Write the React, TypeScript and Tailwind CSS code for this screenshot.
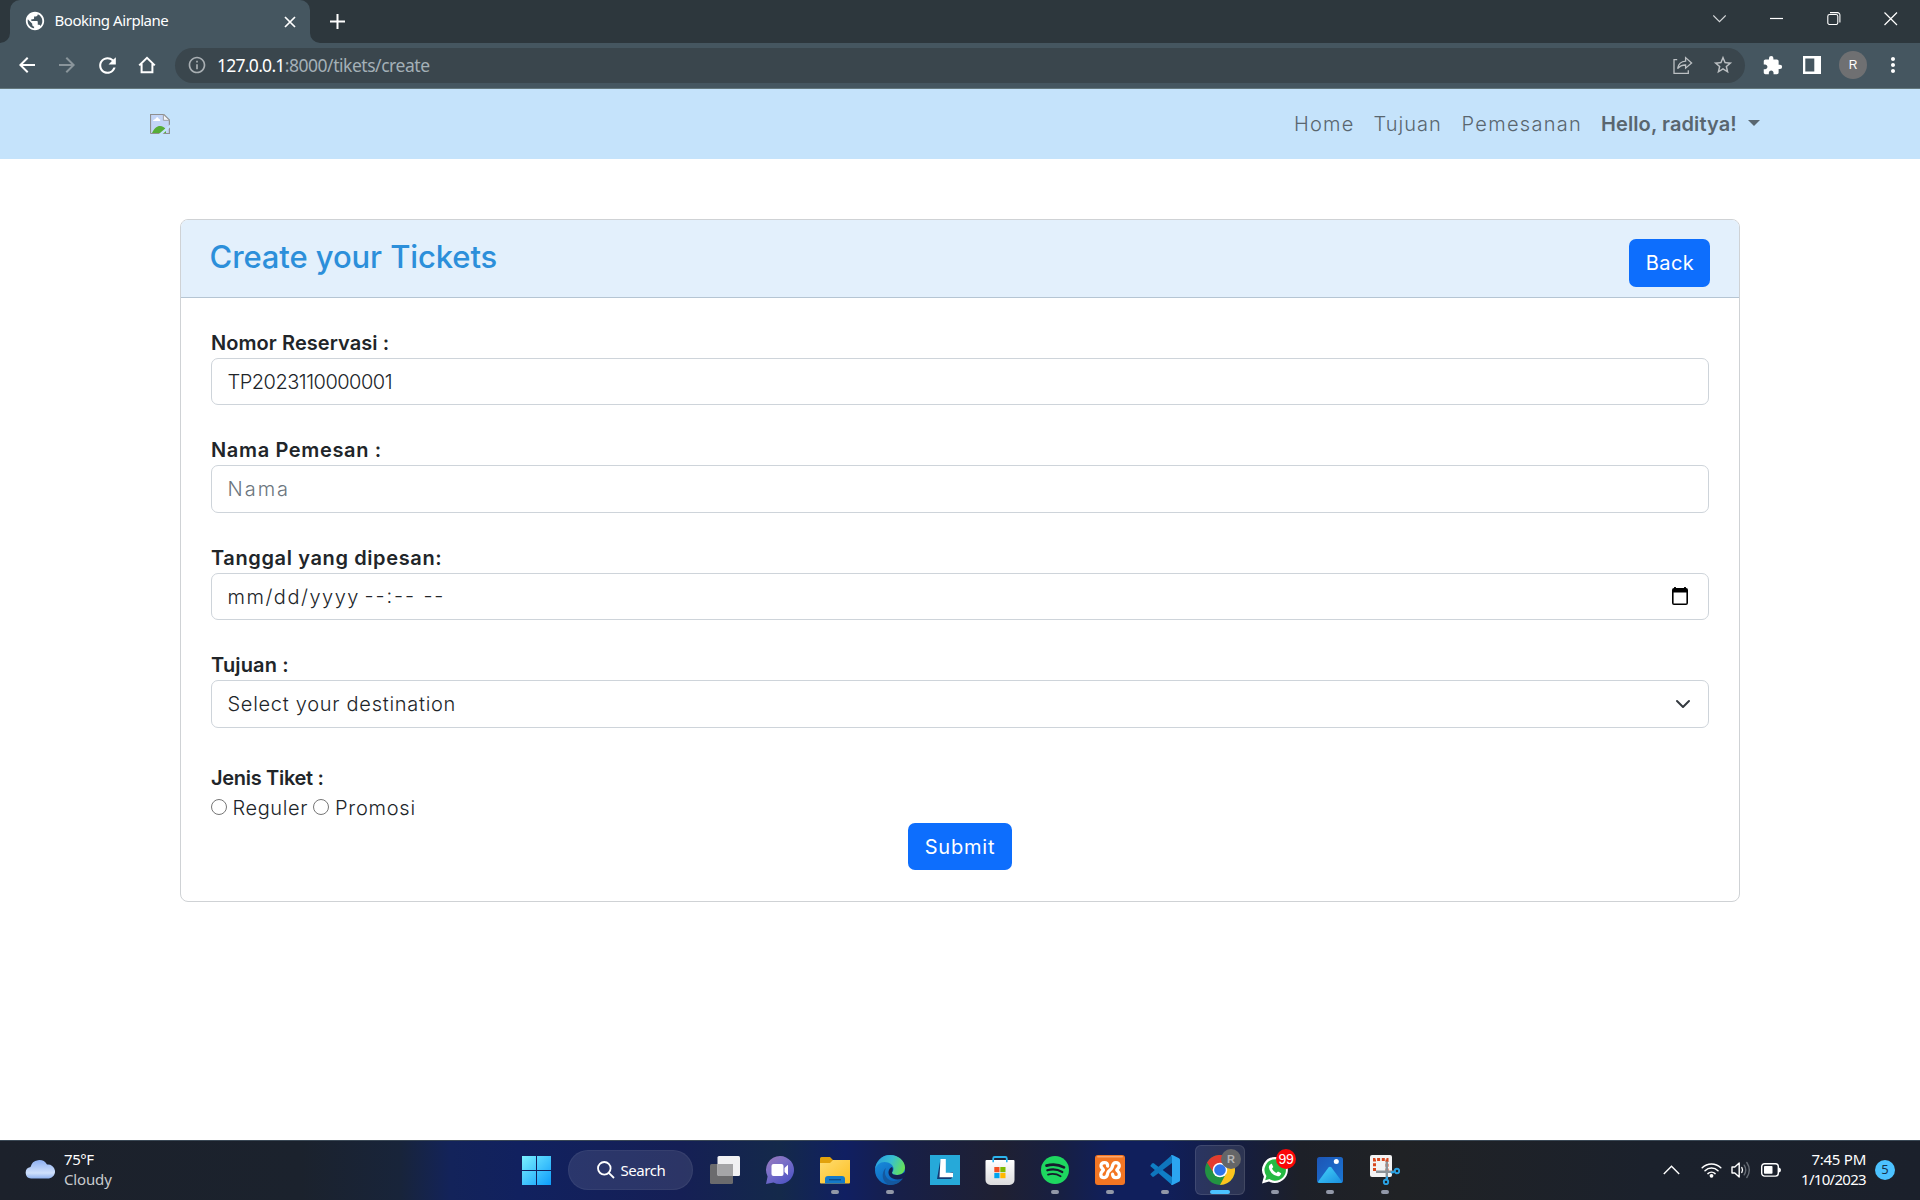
import type { ReactNode } from "react";
import { MdArrowBack, MdArrowForward, MdRefresh, MdInfoOutline, MdStarBorder, MdExtension, MdMoreVert, MdPublic } from "react-icons/md";

function TabStrip() {
  return (
    <div className="flex h-[43px] bg-[#2d373d] text-white">
      <div className="flex w-[10px] items-end">
        <svg width="10" height="10" viewBox="0 0 10 10"><path d="M10 0V10H0A10 10 0 0 0 10 0Z" fill="#455660" /></svg>
      </div>
      <div className="flex h-[43px] w-[300px] items-center rounded-t-[10px] bg-[#455660] pl-[14px] pr-[13px]">
        <MdPublic size={22} className="-mt-px" />
        <span className="ml-[8.5px] flex-1 whitespace-nowrap pb-[4px] text-[15px] leading-5 tracking-[-0.45px]">Booking Airplane</span>
        <svg width="14" height="14" viewBox="0 0 14 14" stroke="white" strokeWidth="1.7"><path d="M2 2L12 12M12 2L2 12" /></svg>
      </div>
      <div className="flex w-[20px] items-end">
        <svg width="10" height="10" viewBox="0 0 10 10"><path d="M0 0V10H10A10 10 0 0 1 0 0Z" fill="#455660" /></svg>
      </div>
      <svg className="mt-[14px]" width="15" height="15" viewBox="0 0 15 15" stroke="white" strokeWidth="2"><path d="M7.5 0V15M0 7.5H15" /></svg>
      <div className="ml-auto flex items-start gap-[43px] pr-[22px] pt-[12px]">
        <svg width="13" height="13" viewBox="0 0 13 13" fill="none" stroke="#d5d8da" strokeWidth="1.1"><path d="M0.3 3.5L6.5 9.7L12.7 3.5" /></svg>
        <svg className="ml-px" width="13" height="13" viewBox="0 0 13 13" stroke="white" strokeWidth="1.2"><path d="M0 6.5H13" /></svg>
        <svg className="ml-px" width="14" height="13" viewBox="0 0 14 13" fill="none" stroke="white" strokeWidth="1.1"><rect x="0.8" y="2.5" width="10" height="10" rx="1.8" /><path d="M3 0.6H10.5A2.4 2.4 0 0 1 12.9 3V10.5" /></svg>
        <svg width="14" height="14" viewBox="0 0 14 14" stroke="white" strokeWidth="1.2"><path d="M0.5 0.5L13 13M13 0.5L0.5 13" /></svg>
      </div>
    </div>
  );
}

function Toolbar() {
  return (
    <div className="flex h-[46px] items-center border-b border-[#64787d] bg-[#455660] pb-px pl-[16px] text-white">
      <div className="flex w-[159px] items-center gap-[17px]">
        <MdArrowBack size={24} className="-ml-px" />
        <MdArrowForward size={24} className="ml-[-1px] text-[#8a959b]" />
        <MdRefresh size={25} className="ml-[-1px]" />
        <svg className="ml-px" width="18" height="18" viewBox="0 0 18 18" fill="none" stroke="white" strokeWidth="2"><path d="M1.2 9.4L9 1.8L16.8 9.4M3.6 7.8V16.2H14.4V7.8" /></svg>
      </div>
      <div className="flex h-[35px] w-[1570px] items-center rounded-full bg-[#3a464d] pl-[12px] pr-[11px]">
        <MdInfoOutline size={20} className="text-[#a9afb3]" />
        <span className="ml-[10px] whitespace-nowrap text-[17.5px] leading-6 tracking-[-0.72px]">127.0.0.1</span>
        <span className="whitespace-nowrap text-[17.5px] leading-6 tracking-[-0.46px] text-[#a4b0b7]">:8000/tikets/create</span>
        <svg className="ml-auto" width="20" height="19" viewBox="0 0 20 19" fill="none" stroke="#bcc0c3" strokeWidth="1.3"><path d="M4.2 3.7H1V17.3H15.3V14.2" /><path d="M4.6 12.6C5.4 8 8.6 5.4 12.6 5.2V1.6L18.6 7L12.6 12.2V9C9.4 9 6.8 9.8 4.6 12.6Z" /></svg>
        <MdStarBorder size={22} className="ml-[19px] text-[#bcc0c3]" />
      </div>
      <div className="flex items-center">
        <MdExtension size={21} className="ml-[17px]" />
        <svg className="ml-[20px]" width="18" height="18" viewBox="0 0 18 18"><path d="M0 0H18V18H0ZM2.3 2.6V15.4H11.3V2.6Z" fill="white" fillRule="evenodd" /></svg>
        <div className="ml-[18px] flex h-7 w-7 items-center justify-center rounded-full bg-[#6f7072] font-['Liberation_Sans'] text-[12px]">R</div>
        <MdMoreVert size={24} className="ml-[13.5px]" />
      </div>
    </div>
  );
}

function BrokenImage() {
  return (
    <svg width="20" height="20" viewBox="0 0 20 20">
      <path d="M0.6 0.6H13.6L19.4 6.4V19.4H0.6Z" fill="#c3d5f7" />
      <path d="M3 7C3 5.4 5.6 5.6 6 4C6.8 2.8 8.6 3.4 8.8 5C10.4 5 10.8 6.6 9.8 7Z" fill="white" />
      <path d="M2 19C4 14.5 7 12 10 12C12.5 12 14.5 13.5 16 15.5V19Z" fill="#56ad36" />
      <path d="M0.5 19.5V0.5H13.8L19.4 6V19.5H0.5" fill="none" stroke="#8f8f8f" strokeWidth="1.2" />
      <path d="M13.4 0.6V6.3H19.4Z" fill="#f5f7fa" stroke="#999" strokeWidth="0.9" />
      <path d="M20 10.4L8.8 20H12.6L20 13.6Z" fill="#c5e3fb" />
    </svg>
  );
}

function SiteNav() {
  return (
    <nav className="flex h-[70px] items-center bg-[#c5e3fb] pl-[150px] pr-[160px] font-['Inter'] text-[20px] font-light leading-[30px] text-[#59666f]">
      <BrokenImage />
      <div className="ml-auto flex items-center whitespace-nowrap">
        <a className="w-[79.5px] tracking-[1.2px]">Home</a>
        <a className="w-[88px] tracking-[1px]">Tujuan</a>
        <a className="w-[139.5px] tracking-[1.3px]">Pemesanan</a>
        <a className="w-[147px] font-semibold tracking-[0.1px]">Hello, raditya!</a>
        <svg className="-mt-[2px]" width="12" height="6" viewBox="0 0 12 6"><path d="M0 0H12L6 6Z" fill="#59666f" /></svg>
      </div>
    </nav>
  );
}

function Label({ children, className = "" }: { children: ReactNode; className?: string }) {
  return <div className={`whitespace-nowrap leading-[30px] font-semibold ${className}`}>{children}</div>;
}

function Box({ children, className }: { children: ReactNode; className: string }) {
  return <div className={`flex items-center whitespace-pre rounded-[7px] border border-[#ced4da] pl-[15.5px] ${className}`}>{children}</div>;
}

function TicketCard() {
  return (
    <section className="mx-[180px] mt-[60px] h-[683px] rounded-[8px] border border-[#cfd2d5] bg-white font-['Inter'] text-[20px] font-light text-[#212529]">
      <header className="flex h-[78px] items-start justify-between rounded-t-[7px] border-b border-[#b5c5d3] bg-[#e3f0fc] pl-[28.5px] pr-[29px]">
        <h1 className="mt-[18px] whitespace-nowrap text-[31px] font-medium leading-[38px] tracking-[-0.1px] text-[#2c8fda]">Create your Tickets</h1>
        <button className="mt-[19px] h-[48px] w-[81px] rounded-[7px] bg-[#0d6efd] pl-px font-normal tracking-[0.4px] text-white">Back</button>
      </header>
      <div className="px-[30px] pt-[30px]">
        <Label className="tracking-[0.08px]">Nomor Reservasi :</Label>
        <Box className="h-[47px] tracking-[-0.5px]">TP2023110000001</Box>
        <Label className="mt-[30px] tracking-[0.65px]">Nama Pemesan :</Label>
        <Box className="h-[48px] tracking-[2px] text-[#6c757d]">Nama</Box>
        <Label className="mt-[30px] tracking-[0.62px]">Tanggal yang dipesan:</Label>
        <Box className="h-[47px] pr-[19px]">
          <span className="w-[137px] tracking-[1.5px]">mm/dd/yyyy</span>
          <span className="pb-[2px] tracking-[1.9px]">--:-- --</span>
          <svg className="-mt-px ml-auto" width="18" height="20" viewBox="0 0 18 20"><path d="M4 1V4M14 1V4" stroke="#000" strokeWidth="1.8" /><path d="M3 2H15A2 2 0 0 1 17 4V17A2 2 0 0 1 15 19H3A2 2 0 0 1 1 17V4A2 2 0 0 1 3 2ZM2.6 6.5V17.4H15.4V6.5Z" fillRule="evenodd" fill="#000" /></svg>
        </Box>
        <Label className="mt-[30px] tracking-[0.15px]">Tujuan :</Label>
        <Box className="h-[48px] pr-[17px] tracking-[0.72px]">
          Select your destination
          <svg className="ml-auto" width="16" height="16" viewBox="0 0 16 16" fill="none" stroke="#343a40" strokeWidth="2" strokeLinecap="round" strokeLinejoin="round"><path d="M2 5L8 11L14 5" /></svg>
        </Box>
        <Label className="mt-[35px] tracking-[-0.3px]">Jenis Tiket :</Label>
        <div className="flex h-[30px] items-center leading-[30px]">
          <span className="mt-[-3px] h-4 w-4 rounded-full border border-[#767676]" />
          <span className="ml-[5.5px] w-[80.5px] tracking-[0.6px]">Reguler</span>
          <span className="mt-[-3px] h-4 w-4 rounded-full border border-[#767676]" />
          <span className="ml-[6px] tracking-[0.75px]">Promosi</span>
        </div>
        <div className="flex justify-center">
          <button className="h-[47px] w-[104px] rounded-[7px] bg-[#0d6efd] font-normal tracking-[0.8px] text-white">Submit</button>
        </div>
      </div>
    </section>
  );
}

function Slot({ children, dot = false, active = false }: { children: ReactNode; dot?: boolean; active?: boolean }) {
  return (
    <div className={`flex h-[50px] w-[50px] flex-col items-center rounded-[6px] pt-[10px] ${active ? "bg-white/10 ring-1 ring-inset ring-white/10" : ""}`}>
      <div className="flex h-[30px] items-center justify-center">{children}</div>
      {dot && <div className="mt-[5px] h-1 w-2 rounded-full bg-[#9298a8]" />}
      {active && <div className="mt-[5px] h-1 w-5 rounded-full bg-[#4cc2ff]" />}
    </div>
  );
}

function TaskView() {
  return (
    <svg width="30" height="30" viewBox="0 0 30 30">
      <rect x="0" y="9" width="23" height="20" rx="1.5" fill="#6b6b6d" />
      <rect x="7.5" y="1" width="22.5" height="20" rx="1.5" fill="#f1f1f3" />
      <path d="M7.5 9H23V21H9A1.5 1.5 0 0 1 7.5 19.5Z" fill="#a5a5a7" />
    </svg>
  );
}

function Chat() {
  return (
    <svg width="30" height="30" viewBox="0 0 30 30">
      <defs><linearGradient id="chat" x1="0" y1="0" x2="0.7" y2="1"><stop offset="0" stopColor="#9a78b8" /><stop offset="0.45" stopColor="#7b70c8" /><stop offset="1" stopColor="#5055c4" /></linearGradient></defs>
      <path d="M15 1A14 14 0 1 1 8.5 27.4L1 29L2.6 21.5A14 14 0 0 1 15 1Z" fill="url(#chat)" />
      <rect x="6.5" y="9" width="12" height="12" rx="2" fill="white" />
      <path d="M19.5 13L23 9.8V20.2L19.5 17Z" fill="white" />
    </svg>
  );
}

function Folder() {
  return (
    <svg width="30" height="30" viewBox="0 0 30 30">
      <defs><linearGradient id="folder" x1="0" y1="0" x2="1" y2="1"><stop offset="0" stopColor="#ffdc70" /><stop offset="1" stopColor="#fcbf22" /></linearGradient></defs>
      <path d="M0 3.5A1.5 1.5 0 0 1 1.5 2H10L13 5H29A1 1 0 0 1 30 6V12H0Z" fill="#e2a20c" />
      <path d="M0 8H10L13 5H30V27.5A1 1 0 0 1 29 28.5H1A1 1 0 0 1 0 27.5Z" fill="url(#folder)" />
      <path d="M5 28.5V24A3 3 0 0 1 8 21H22A3 3 0 0 1 25 24V28.5Z" fill="#1479c9" />
      <path d="M9 24.7H21" stroke="#0b4c8c" strokeWidth="1.4" />
    </svg>
  );
}

function Edge() {
  return (
    <svg width="30" height="30" viewBox="0 0 30 30">
      <defs>
        <linearGradient id="edgeTop" x1="0" y1="0.3" x2="1" y2="0.6"><stop offset="0" stopColor="#2a9fdd" /><stop offset="0.5" stopColor="#38bfd0" /><stop offset="1" stopColor="#67e254" /></linearGradient>
        <linearGradient id="edgeLow" x1="0" y1="0" x2="0.6" y2="1"><stop offset="0" stopColor="#1b93e0" /><stop offset="1" stopColor="#0c63bd" /></linearGradient>
      </defs>
      <circle cx="15" cy="15" r="15" fill="url(#edgeLow)" />
      <path d="M0 14.5C1 6 7.5 0 15 0C23.5 0 30 6 30 12.5C30 17 26.5 20 22.5 20C19 20 17 19 17 17.8C17 17 18.6 16.3 18.6 13.8C18.6 10 14.5 7 9.5 7C5 7 1.5 10 0 14.5Z" fill="url(#edgeTop)" />
      <path d="M11 13C9.5 16 9.5 20.5 12.5 23.5C17 27.5 23 26.5 28 23.3C25.5 27.5 20.5 30 15.5 30C9 29 6.8 22.5 8 18C8.6 15.5 9.8 13.8 11 13Z" fill="#14589f" />
      <path d="M17 17.8C17 19.4 19.5 20.3 22.5 20C25 20 27.4 18.8 30 17V22L28 23.3C23 25.5 17 24.5 14.6 21C12.8 18 13 14 17 12C18.8 14 17 17 17 17.8Z" fill="#141f52" />
    </svg>
  );
}

function LApp() {
  return (
    <svg width="30" height="30" viewBox="0 0 30 30">
      <rect width="30" height="30" fill="#26a9d9" />
      <path d="M10.5 4L7 24H21L23 21.5V17L11 20Z" fill="#123a72" />
      <path d="M10.5 4H15.8V17.8H23V22.3H9.5Z" fill="white" />
    </svg>
  );
}

function Store() {
  return (
    <svg width="30" height="30" viewBox="0 0 30 30">
      <defs><linearGradient id="store" x1="0" y1="0" x2="0" y2="1"><stop offset="0" stopColor="#fff" /><stop offset="1" stopColor="#dcdcdd" /></linearGradient></defs>
      <path d="M8.2 7V3.5A1.5 1.5 0 0 1 9.7 2H20.3A1.5 1.5 0 0 1 21.8 3.5V7" fill="none" stroke="#2cb5ee" strokeWidth="1.8" />
      <path d="M0.5 6A1 1 0 0 1 1.5 5H28.5A1 1 0 0 1 29.5 6V25A5 5 0 0 1 24.5 30H5.5A5 5 0 0 1 0.5 25Z" fill="url(#store)" />
      <path d="M8.2 5V7.2M21.8 5V7.2" stroke="#2cb5ee" strokeWidth="1.6" />
      <rect x="9.3" y="12" width="5.2" height="5.2" fill="#f25022" /><rect x="15.3" y="12" width="5.2" height="5.2" fill="#7fba00" />
      <rect x="9.3" y="18" width="5.2" height="5.2" fill="#00a4ef" /><rect x="15.3" y="18" width="5.2" height="5.2" fill="#ffb900" />
    </svg>
  );
}

function Spotify() {
  return (
    <svg width="28" height="28" viewBox="0 0 28 28" fill="none" stroke="#161b2c" strokeLinecap="round">
      <circle cx="14" cy="14" r="14" fill="#1ed760" stroke="none" />
      <path d="M5.5 9.6C11 8 18 8.6 23 11.4" strokeWidth="2.7" />
      <path d="M6.3 14.3C11 12.9 16.8 13.4 21.3 16" strokeWidth="2.2" />
      <path d="M7 18.6C11 17.5 15.7 17.9 19.6 20.2" strokeWidth="1.8" />
    </svg>
  );
}

function Xampp() {
  return (
    <svg width="30" height="30" viewBox="0 0 30 30">
      <rect width="30" height="30" rx="3" fill="#f37623" />
      <rect x="2" y="1" width="26" height="1.6" rx="0.8" fill="#fba66c" />
      <path d="M12.6 11C12.8 8.6 11.6 7.6 9.4 7.6C7 7.6 5.8 9 6 11C6.2 13 8 13.6 8.4 15C7.6 16.2 5.8 17 5.8 19.4C5.8 21.6 7.2 22.6 9.2 22.6C12.4 22.6 12.4 20 12.8 17.8C13.2 15.6 16.6 14.8 17.2 12.2C17.6 9.6 18 7.6 20.8 7.6C23.2 7.6 24.4 9 24.2 11C24 13 22.4 13.6 21.8 15C22.4 16.2 24.4 17 24.4 19.4C24.4 21.6 23 22.6 21 22.6C18.8 22.6 17.6 21.6 17.6 19.2" fill="none" stroke="white" strokeWidth="3.3" strokeLinejoin="round" strokeLinecap="round" />
    </svg>
  );
}

function VsCode() {
  return (
    <svg width="30" height="30" viewBox="0 0 30 30">
      <path d="M0.6 10.2L2.2 8.4Q3 7.8 4 8.4L22 22V30L0.8 11.6Q0.1 10.9 0.6 10.2Z" fill="#0f7fc6" />
      <path d="M0.6 19.8L2.2 21.6Q3 22.2 4 21.6L22 8V0L0.8 18.4Q0.1 19.1 0.6 19.8Z" fill="#0f76bd" />
      <path d="M21 0.3Q22 -0.2 23 0.3L29 3.2Q30 3.8 30 4.8V25.2Q30 26.2 29 26.8L23 29.7Q22 30.2 21 29.5L22 28V2Z" fill="#2ba5f0" />
    </svg>
  );
}

function Chrome() {
  return (
    <div className="relative">
      <svg width="30" height="30" viewBox="0 0 30 30">
        <circle cx="15" cy="15" r="15" fill="#229342" />
        <path d="M15 8H28.3A15 15 0 0 1 15 30L21.1 18.5Z" fill="#fcc31e" />
        <path d="M15 8H28.3A15 15 0 0 0 2 7.5L9 18.5Z" fill="#e33b2e" />
        <circle cx="15" cy="15" r="7.3" fill="white" /><circle cx="15" cy="15" r="5.8" fill="#2f74ea" />
      </svg>
      <span className="absolute left-[16px] top-[-6px] flex h-5 w-5 items-center justify-center rounded-full bg-[#656668] font-['Liberation_Sans'] text-[11px] font-bold text-[#b5b5b6]">R</span>
    </div>
  );
}

function WhatsApp() {
  return (
    <div className="relative h-7 w-7">
      <svg width="28" height="28" viewBox="0 0 28 28"><path d="M14.3 1A13 13 0 1 1 8 25.6L1 27.4L2.9 20.6A13 13 0 0 1 14.3 1Z" fill="white" /><path d="M14.3 3.3A10.7 10.7 0 1 1 8.6 23.1L4.2 24.2L5.4 20A10.7 10.7 0 0 1 14.3 3.3Z" fill="#25b943" /><path d="M10.8 7.8L12.3 11L11 12.8Q12.4 15.6 15.3 17L17 15.6L20.2 17.2Q19.6 20.3 16.8 20.3Q13.5 20 10.8 17.2Q8 14.2 7.8 11.3Q8 8.3 10.8 7.8Z" fill="white" /></svg>
      <span className="absolute left-[15px] top-[-7px] flex h-5 w-5 items-center justify-center rounded-full bg-[#fb0707] font-['Liberation_Sans'] text-[14px] tracking-[-0.3px] text-white">99</span>
    </div>
  );
}

function Photos() {
  return (
    <svg width="26" height="26" viewBox="0 0 26 26">
      <defs><linearGradient id="photo" x1="0" y1="0" x2="1" y2="1"><stop offset="0" stopColor="#1d55b5" /><stop offset="1" stopColor="#1a76d4" /></linearGradient><linearGradient id="hill" x1="0" y1="0" x2="1" y2="1"><stop offset="0" stopColor="#45d5fa" /><stop offset="1" stopColor="#1a8fe0" /></linearGradient></defs>
      <rect width="26" height="26" rx="2.5" fill="url(#photo)" />
      <path d="M0.8 25L11.5 10.5Q13 9 14.5 10.5L25.2 25Q24.5 26 23.5 26H2.5Q1.3 26 0.8 25Z" fill="url(#hill)" />
      <circle cx="19.3" cy="4.6" r="2.5" fill="white" />
    </svg>
  );
}

function Snip() {
  return (
    <svg width="30" height="30" viewBox="0 0 30 30">
      <rect x="0" y="0" width="22" height="22" rx="2" fill="#f3f3f4" />
      <path d="M4.5 16V4.5H17V16" fill="none" stroke="#d8471d" strokeWidth="3" strokeDasharray="3 1.7" />
      <path d="M6 16.7H24M16.8 6.5V24" stroke="#8b9298" strokeWidth="2.4" />
      <path d="M21 17.6L24 17M17.2 21.5L16.8 24" stroke="#2aa3e6" strokeWidth="2.2" />
      <circle cx="27" cy="16" r="2.2" fill="none" stroke="#2aa3e6" strokeWidth="1.9" />
      <circle cx="16" cy="27" r="2.2" fill="none" stroke="#2aa3e6" strokeWidth="1.9" />
    </svg>
  );
}

function Center() {
  return (
    <div className="flex items-center">
      <svg className="ml-[13px]" width="29" height="29" viewBox="0 0 29 29">
        <defs><linearGradient id="win" x1="0" y1="0" x2="1" y2="1"><stop offset="0" stopColor="#7af0ff" /><stop offset="1" stopColor="#0d9cfa" /></linearGradient></defs>
        <path d="M0 0H14V14H0ZM15 0H29V14H15ZM0 15H14V29H0ZM15 15H29V29H15Z" fill="url(#win)" />
      </svg>
      <div className="ml-[17px] flex h-10 w-[125px] items-center rounded-full border border-white/5 bg-white/10 pl-[28px] text-[15px] tracking-[-0.45px]">
        <svg width="18" height="18" viewBox="0 0 18 18" fill="none" stroke="white" strokeWidth="1.8"><circle cx="7.3" cy="7.3" r="6.3" /><path d="M11.8 11.8L17 17" /></svg>
        <span className="ml-[5.5px]">Search</span>
      </div>
      <div className="ml-[7px] flex gap-[5px]">
        <Slot><TaskView /></Slot>
        <Slot><Chat /></Slot>
        <Slot dot><Folder /></Slot>
        <Slot dot><Edge /></Slot>
        <Slot><LApp /></Slot>
        <Slot><Store /></Slot>
        <Slot dot><Spotify /></Slot>
        <Slot dot><Xampp /></Slot>
        <Slot dot><VsCode /></Slot>
        <Slot active><Chrome /></Slot>
        <Slot dot><WhatsApp /></Slot>
        <Slot dot><Photos /></Slot>
        <Slot dot><Snip /></Slot>
      </div>
    </div>
  );
}

function Taskbar() {
  return (
    <footer className="flex h-[60px] items-center border-t border-[#3a4855] bg-[linear-gradient(90deg,#1c212b_0px,#1b222d_300px,#18243a_400px,#13235a_450px,#11215f_520px,#151f55_680px,#14294a_780px,#101f62_845px,#171f48_900px,#1f2032_1000px,#171f42_1060px,#101f5c_1110px,#101f5c_1160px,#151d40_1240px,#1d2028_1300px,#202225_1400px,#1b212c_1650px,#1b202b_1920px)] pb-px text-white">
      <div className="flex w-[509px] items-center pl-[25px]">
        <svg className="mt-[-3px]" width="30" height="20" viewBox="0 0 30 20">
          <defs><linearGradient id="cloud" x1="0" y1="0" x2="0" y2="1"><stop offset="0" stopColor="#8eb0f2" /><stop offset="0.7" stopColor="#cfe0fb" /><stop offset="1" stopColor="#8fb2ef" /></linearGradient></defs>
          <path d="M6 19.5A5.8 5.8 0 0 1 5.5 8A9 9 0 0 1 22 5.6A7 7 0 0 1 24 19.5Z" fill="url(#cloud)" />
        </svg>
        <div className="ml-[9px] pb-[3px] text-[15px] leading-[20px]">
          <div className="tracking-[-0.45px]">75°F</div>
          <div className="tracking-[-0.15px] text-[#c8cacd]">Cloudy</div>
        </div>
      </div>
      <Center />
      <div className="ml-[252.5px] flex flex-1 items-center">
        <svg width="17" height="10" viewBox="0 0 17 10" fill="none" stroke="white" strokeWidth="1.4"><path d="M0.8 9L8.5 1.3L16.2 9" /></svg>
        <svg className="ml-[21px]" width="21" height="16" viewBox="0 0 21 16" fill="none" stroke="white" strokeWidth="1.5" strokeLinecap="round"><path d="M1.2 5.8A13.2 13.2 0 0 1 19.8 5.8M4 8.8A9.2 9.2 0 0 1 17 8.8M6.9 11.6A5.2 5.2 0 0 1 14.1 11.6" /><circle cx="10.5" cy="13.8" r="1.9" fill="white" stroke="none" /></svg>
        <svg className="ml-[9px]" width="20" height="18" viewBox="0 0 20 18" fill="none" stroke="white" strokeWidth="1.4" strokeLinecap="round" strokeLinejoin="round"><path d="M1 6H3.8L8.2 2V16L3.8 12H1ZM10.8 6.5Q12.3 9 10.8 11.5" /><path d="M13.2 4.2Q16.3 9 13.2 13.8M15.8 1.5Q20.8 9 15.8 16.5" stroke="#656b74" /></svg>
        <svg className="ml-[10px]" width="20" height="14" viewBox="0 0 20 14"><rect x="0.7" y="0.7" width="16.6" height="12.4" rx="2.8" fill="none" stroke="white" strokeWidth="1.4" /><rect x="3" y="3" width="8.5" height="7.8" rx="0.8" fill="white" /><path d="M18 4.5Q20 5 20 7Q20 9 18 9.5Z" fill="white" /></svg>
        <div className="ml-auto pb-[3px] text-right text-[15px] leading-[20px]">
          <div className="tracking-[-0.25px]">7:45 PM</div>
          <div className="tracking-[-0.7px]">1/10/2023</div>
        </div>
        <div className="ml-[9px] mr-[25px] flex h-5 w-5 items-center justify-center rounded-full bg-[#4cc2ff] text-[13px] text-[#15314a]">5</div>
      </div>
    </footer>
  );
}

export default function App() {
  return (
    <div className="flex h-[1200px] w-[1920px] flex-col overflow-hidden bg-white font-['Noto_Sans',sans-serif]">
      <TabStrip />
      <Toolbar />
      <SiteNav />
      <main className="flex-1"><TicketCard /></main>
      <Taskbar />
    </div>
  );
}
